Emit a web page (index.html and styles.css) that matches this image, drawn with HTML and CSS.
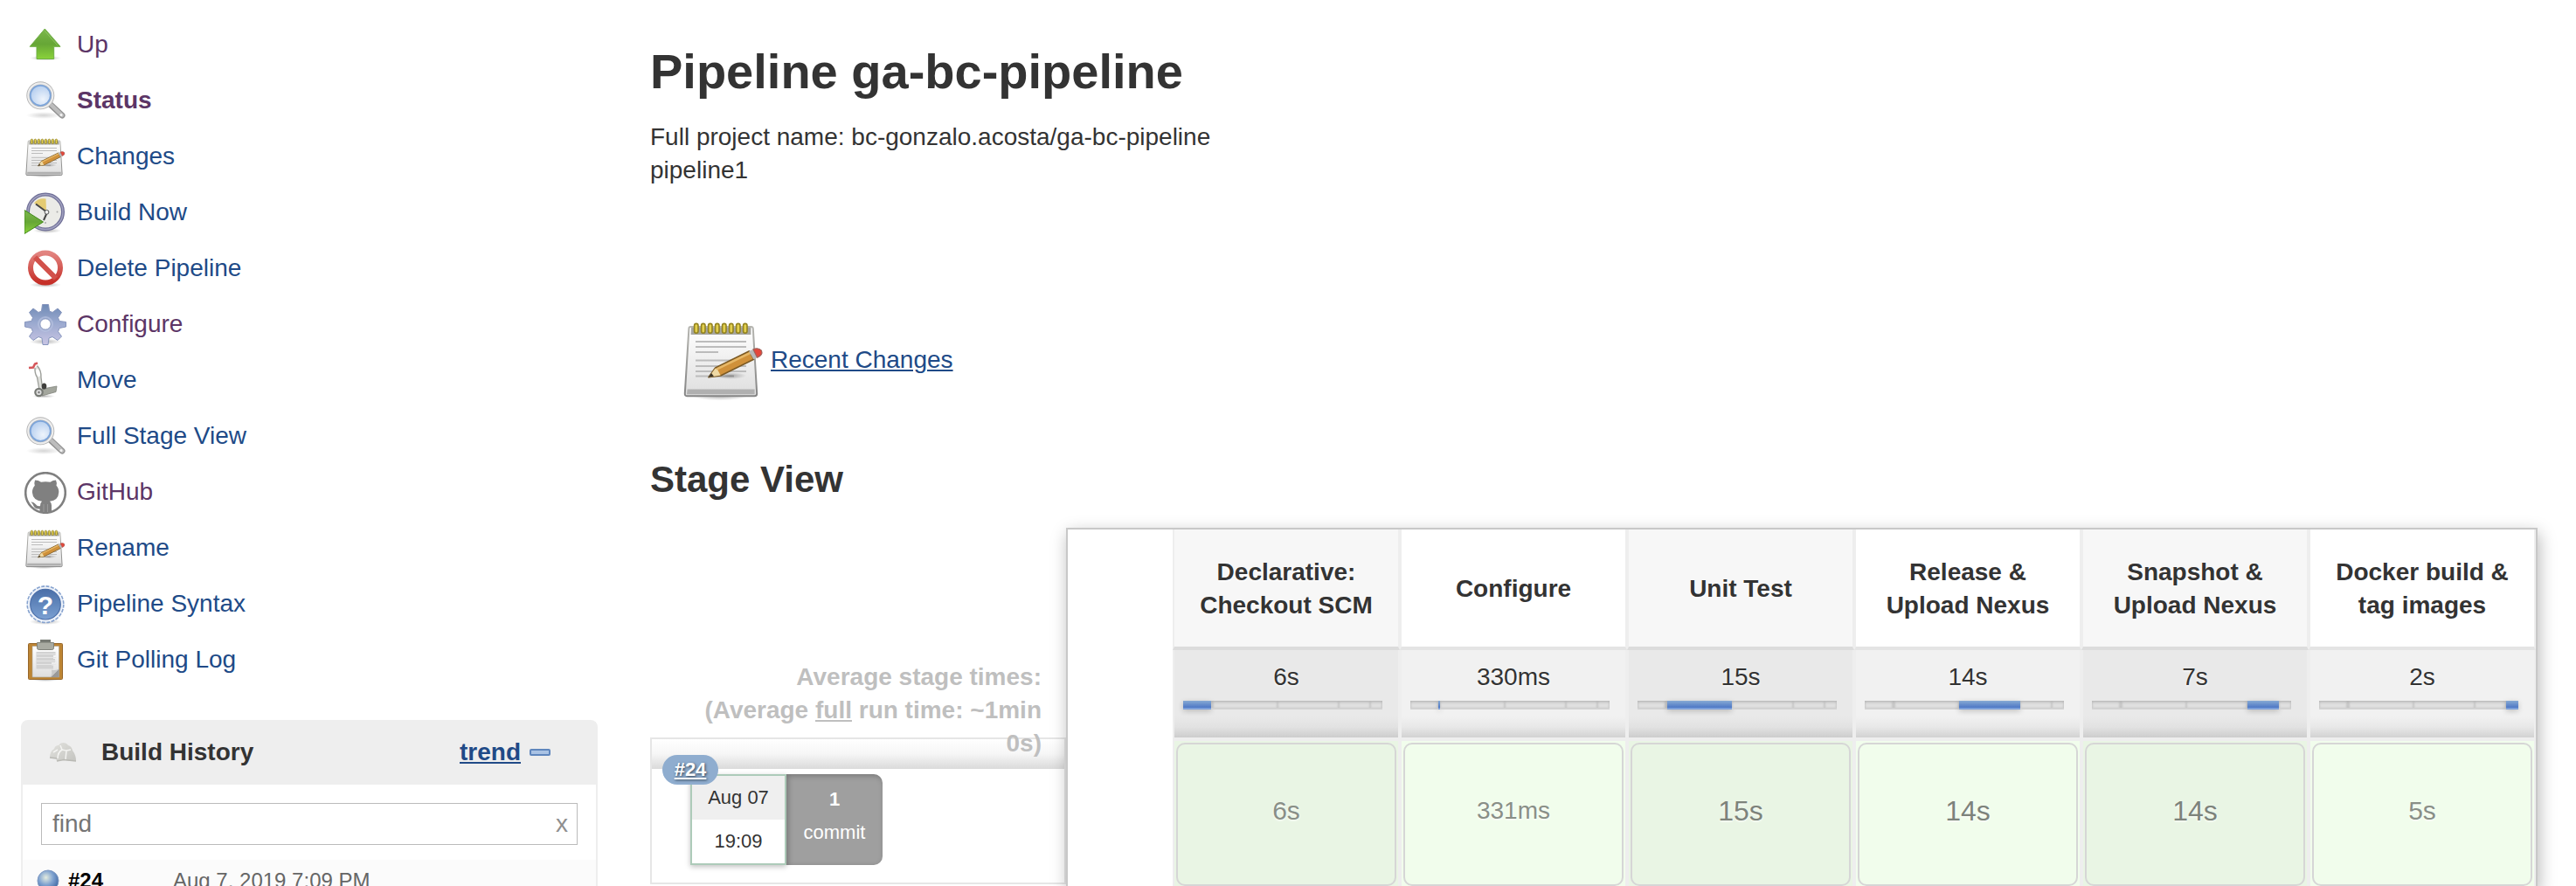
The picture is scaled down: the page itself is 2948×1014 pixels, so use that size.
FILE: index.html
```html
<!DOCTYPE html>
<html lang="en">
<head>
<meta charset="utf-8">
<title>ga-bc-pipeline</title>
<link rel="stylesheet" href="styles.css">
</head>
<body>
<svg class="defs" width="0" height="0" aria-hidden="true">
  <defs>
    <linearGradient id="g-green" x1="0" y1="0" x2="0" y2="1"><stop offset="0" stop-color="#7cb84c"/><stop offset=".5" stop-color="#66a636"/><stop offset="1" stop-color="#8ad23a"/></linearGradient>
    <radialGradient id="g-lens" cx=".6" cy=".65" r=".7"><stop offset="0" stop-color="#eef4fc"/><stop offset="1" stop-color="#a9c6ec"/></radialGradient>
    <linearGradient id="g-paper" x1="0" y1="0" x2="0" y2="1"><stop offset="0" stop-color="#ffffff"/><stop offset="1" stop-color="#dedede"/></linearGradient>
    <linearGradient id="g-edge" x1="0" y1="0" x2="0" y2="1"><stop offset="0" stop-color="#b5b5b0"/><stop offset="1" stop-color="#858585"/></linearGradient>
    <linearGradient id="g-red" x1="0" y1="0" x2="0" y2="1"><stop offset="0" stop-color="#e28480"/><stop offset="1" stop-color="#c62f28"/></linearGradient>
    <linearGradient id="g-gear" x1="0" y1="0" x2="0" y2="1"><stop offset="0" stop-color="#6f8ab5"/><stop offset=".45" stop-color="#9aa9cf"/><stop offset="1" stop-color="#c9c5e4"/></linearGradient>
    <linearGradient id="g-help" x1="0" y1="0" x2="0" y2="1"><stop offset="0" stop-color="#4a6fa8"/><stop offset="1" stop-color="#7ba0d2"/></linearGradient>
    <radialGradient id="g-ball" cx=".4" cy=".35" r=".7"><stop offset="0" stop-color="#e4ecdf"/><stop offset=".5" stop-color="#7fa2d0"/><stop offset="1" stop-color="#3a639f"/></radialGradient>
    <radialGradient id="g-shadow"><stop offset="0" stop-color="#000" stop-opacity=".28"/><stop offset="1" stop-color="#000" stop-opacity="0"/></radialGradient>
    <linearGradient id="g-hat" x1="0" y1="0" x2="1" y2="1"><stop offset="0" stop-color="#e2e2de"/><stop offset="1" stop-color="#c4c4c0"/></linearGradient>
  </defs>
  <symbol id="i-up" viewBox="0 0 48 48">
    <ellipse cx="24" cy="38.500" rx="18" ry="3" fill="url(#g-shadow)"/>
    <path d="M23.300 5 41 25.300H33.700V39.500H14V25.300H6.200Z" fill="url(#g-green)" stroke="#6fae45" stroke-width="1"/>
    <path d="M23.300 7.500 37.800 24" stroke="#a4d276" stroke-width="1" fill="none" opacity=".6"/>
  </symbol>
  <symbol id="i-search" viewBox="0 0 48 48">
    <ellipse cx="22" cy="40" rx="20" ry="4" fill="url(#g-shadow)" opacity=".6"/>
    <path d="M29 27 43 40" stroke="#929292" stroke-width="7" stroke-linecap="round"/>
    <path d="M29.500 27 43 40" stroke="#bdbdbd" stroke-width="4.500" stroke-linecap="round"/>
    <circle cx="42" cy="39.500" r="1.500" fill="#f4f4f4"/>
    <circle cx="18.300" cy="17.300" r="14" fill="url(#g-lens)" stroke="#b3b3b3" stroke-width="4"/>
    <circle cx="18.300" cy="17.300" r="14" fill="none" stroke="#ededed" stroke-width="2.200"/>
    <circle cx="18.300" cy="17.300" r="11.500" fill="none" stroke="#7da5da" stroke-width="1.800"/>
  </symbol>
  <symbol id="i-notepad" viewBox="0 0 48 48">
    <ellipse cx="22" cy="44.700" rx="16" ry="2.500" fill="url(#g-shadow)"/>
    <path d="M5.200 5H39.800Q40.800 5 40.900 6L43.100 43.200Q43.100 44.600 41.800 44.600H3Q1.800 44.600 1.900 43.200L4.200 6Q4.200 5 5.200 5Z" fill="url(#g-paper)" stroke="url(#g-edge)" stroke-width="1"/>
    <path d="M5.500 5.500H39.700V9.500H5.300Z" fill="#a5a5a0"/>
    <path d="M3.300 40.800H41.800V43.600H3Z" fill="#b0b0b0"/>
    <path d="M8 13.500H37M8 16.500H37M8 19.500H21M8 24.300H37M8 27.500H37M8 30.500H37M8 33.300H30" stroke="#bcbcbc" stroke-width="1"/>
    <g fill="#e3d04e" stroke="#93831f" stroke-width=".8"><rect x="7.300" y="3.200" width="2.200" height="5.400" rx="1.100"/><rect x="11.300" y="3.200" width="2.200" height="5.400" rx="1.100"/><rect x="15.300" y="3.200" width="2.200" height="5.400" rx="1.100"/><rect x="19.300" y="3.200" width="2.200" height="5.400" rx="1.100"/><rect x="23.300" y="3.200" width="2.200" height="5.400" rx="1.100"/><rect x="27.300" y="3.200" width="2.200" height="5.400" rx="1.100"/><rect x="31.300" y="3.200" width="2.200" height="5.400" rx="1.100"/><rect x="35.300" y="3.200" width="2.200" height="5.400" rx="1.100"/></g>
    <ellipse cx="28" cy="33" rx="9" ry="2" fill="url(#g-shadow)"/>
    <path d="M15.500 33.900 19.300 28.500 38.800 18.900 41.300 23.600 22.300 33Z" fill="#d0913a" stroke="#7b5a25" stroke-width=".8" stroke-linejoin="round"/>
    <path d="M20 29.300 39.300 19.900" stroke="#e6b868" stroke-width="1.300"/>
    <path d="M15.500 33.900 19.300 28.700 20.700 29.800 22.300 32.800Z" fill="#efd9a4"/>
    <path d="M15.300 34 17 31.500 18.500 33.300Z" fill="#3c3528"/>
    <path d="M38.500 19 41 17.900 43.300 22.600 41.200 23.600Z" fill="#b9b9b9"/>
    <path d="M41 17.900Q44 16.700 45.700 18.600 46.800 21 43.300 22.600Z" fill="#e4473b" stroke="#a06058" stroke-width=".6"/>
  </symbol>
  <symbol id="i-clock" viewBox="0 0 48 48">
    <ellipse cx="26" cy="44" rx="16" ry="3" fill="url(#g-shadow)"/>
    <circle cx="24" cy="22.500" r="20" fill="#ebebe7" stroke="#6f6f97" stroke-width="4"/>
    <circle cx="24" cy="22.500" r="20" fill="none" stroke="#a2a2c0" stroke-width="1.500"/>
    <path d="M11 12.500Q16 6 24.500 7.500L25 22Z" fill="#e4cb72"/>
    <path d="M13 13.500 26 23 22 32" stroke="#454545" stroke-width="2" fill="none"/>
    <circle cx="25.500" cy="22.800" r="2.400" fill="#eee" stroke="#555" stroke-width="1"/>
    <g fill="#aaa"><circle cx="37.500" cy="22.500" r="1"/><circle cx="24" cy="35" r="1"/></g>
    <path d="M0 20.500 21.500 34 0 47.500Z" fill="url(#g-green)" stroke="#438a1c" stroke-width="1"/>
  </symbol>
  <symbol id="i-no" viewBox="0 0 48 48">
    <ellipse cx="24" cy="42" rx="18" ry="3" fill="url(#g-shadow)"/>
    <circle cx="24" cy="22.500" r="17" fill="#fff" stroke="url(#g-red)" stroke-width="6"/>
    <path d="M12 10.500 36 34.500" stroke="#d2514b" stroke-width="6"/>
  </symbol>
  <symbol id="i-gear" viewBox="0 0 48 48">
    <ellipse cx="24" cy="43" rx="18" ry="3.500" fill="url(#g-shadow)"/>
    <path fill-rule="evenodd" d="M20.500.500H27.500L28.500 8 32 9.500 38 5 42.500 9.500 38.500 15.500 40 19.500 47.500 20.500V26L40 27.500 38.500 31.500 42.500 37 38 41.500 32 37.500 28 39 27 46.500H21L20 39 16 37.500 10 41.500 5.500 37 9.500 31.500 8 27.500.500 26V20.500L8 19.500 9.500 15.500 5.500 9.500 10 5 16 9.500 19.500 8ZM24 16.800A6.200 6.200 0 1 0 24 29.200 6.200 6.200 0 1 0 24 16.800Z" fill="url(#g-gear)" stroke="#8695bd" stroke-width="1" stroke-linejoin="round"/>
    <circle cx="24" cy="23" r="8" fill="none" stroke="#b6c2e0" stroke-width="2" opacity=".7"/>
  </symbol>
  <symbol id="i-move" viewBox="0 0 48 48">
    <ellipse cx="22" cy="41.500" rx="13" ry="2" fill="url(#g-shadow)"/>
    <path d="M21 33 37 30 36 36.500 20 41Z" fill="#a3a69d" stroke="#80837b" stroke-width=".8"/>
    <path d="M12 9Q11.500 15 14.500 20L17 34 21 35 19 20Q19.500 12 14.500 6.500" fill="#dfe0dc" stroke="#9c9e99" stroke-width="1.300"/>
    <path d="M13 12Q13 16 16 19.500L18 18Q18 12 14.500 10Z" fill="#fff"/>
    <path d="M5 9 10 8.500 12 4.500 15 3.500" stroke="#d4565a" stroke-width="2.600" fill="none"/>
    <ellipse cx="22.500" cy="30" rx="2.800" ry="3.500" fill="#3f3f3d"/>
    <circle cx="16.500" cy="37" r="4.200" fill="#ddd" stroke="#777a75" stroke-width="2.200"/>
    <circle cx="16.500" cy="37" r="1.200" fill="#777"/>
  </symbol>
  <symbol id="i-github" viewBox="0 0 48 48">
    <circle cx="24" cy="24" r="22.800" fill="#fff" stroke="#808080" stroke-width="2.600"/>
    <path d="M12 9.500Q16 9.500 19 11.700 24 10.700 29.500 11.700 32.500 9.500 36 9.500 37.500 13 36.500 15.800 39.700 19 39.200 24 38.800 32.500 29 33.800 31 35.800 31 38.500V46Q24 48 17.500 46V42.500Q12.500 43 10.700 39.500 9.500 36.500 7.500 34.500 10.500 34 12.700 37 14.700 39.800 18 39 18 35.500 20 33.800 9.600 32.500 9 24 8.700 19 11.800 15.800 10.800 13 12 9.500Z" fill="#808080"/>
    <path d="M22 37V46M26.500 37V46" stroke="#9a9a9a" stroke-width="1"/>
  </symbol>
  <symbol id="i-clipboard" viewBox="0 0 48 48">
    <ellipse cx="24" cy="46" rx="16" ry="2" fill="url(#g-shadow)"/>
    <rect x="4.500" y="4.500" width="39" height="41" rx="1" fill="#bd8534" stroke="#96662a" stroke-width="1"/>
    <path d="M9 7.500H39.500V43H9Z" fill="url(#g-paper)" stroke="#a8a08e" stroke-width=".6"/>
    <path d="M13.500 14H35.500V18H33V22H35V26H31V29.500H33V33.500H13.500Z" fill="#d2d2d2"/>
    <path d="M13.500 16.500H36M13.500 20.500H36M13.500 24.500H36M13.500 28.500H36" stroke="#e6e6e6" stroke-width="1"/>
    <path d="M30 43 39.500 33.500V43Z" fill="#999"/>
    <path d="M30 43Q32 39 31 34.500 35 36 39.500 33.500Z" fill="#c8c8c8"/>
    <path d="M18.500 0H29.500V3.500H33.500V9.500Q33.500 11.500 31.500 11.500H16.500Q14.500 11.500 14.500 9.500V3.500H18.500Z" fill="#a9aba2" stroke="#80827a" stroke-width="1"/>
    <path d="M18.500 0H29.500V3.500H18.500Z" fill="#777a73"/>
  </symbol>
</svg>

<div class="page">
  <aside class="sidebar">
    <nav class="tasks">
      <a class="task visited" href="#"><svg class="icon"><use href="#i-up"/></svg><span>Up</span></a>
      <a class="task visited current" href="#"><svg class="icon"><use href="#i-search"/></svg><span>Status</span></a>
      <a class="task" href="#"><svg class="icon"><use href="#i-notepad"/></svg><span>Changes</span></a>
      <a class="task" href="#"><svg class="icon"><use href="#i-clock"/></svg><span>Build Now</span></a>
      <a class="task" href="#"><svg class="icon"><use href="#i-no"/></svg><span>Delete Pipeline</span></a>
      <a class="task visited" href="#"><svg class="icon"><use href="#i-gear"/></svg><span>Configure</span></a>
      <a class="task" href="#"><svg class="icon"><use href="#i-move"/></svg><span>Move</span></a>
      <a class="task" href="#"><svg class="icon"><use href="#i-search"/></svg><span>Full Stage View</span></a>
      <a class="task visited" href="#"><svg class="icon"><use href="#i-github"/></svg><span>GitHub</span></a>
      <a class="task" href="#"><svg class="icon"><use href="#i-notepad"/></svg><span>Rename</span></a>
      <a class="task" href="#"><svg class="icon" viewBox="0 0 48 48">
        <ellipse cx="24" cy="43.500" rx="18" ry="3.500" fill="url(#g-shadow)"/>
        <circle cx="24" cy="23.700" r="20.800" fill="#edf2fa" stroke="#87a3cf" stroke-width="1.600" stroke-dasharray="4 1.440"/>
        <circle cx="24" cy="23.700" r="17.300" fill="url(#g-help)" stroke="#4d70aa" stroke-width="1.200"/>
        <text x="24" y="34.500" text-anchor="middle" class="help-mark">?</text>
      </svg><span>Pipeline Syntax</span></a>
      <a class="task" href="#"><svg class="icon"><use href="#i-clipboard"/></svg><span>Git Polling Log</span></a>
    </nav>

    <section class="history">
      <header class="history-head">
        <svg class="weather" viewBox="0 0 32 24"><path d="M1 18Q1 11 6 8 7 4 11 4 13 1 16 1 20 1 22 4 26 5 27 10 31 15 31 22L21 21.500 17 20 9 22 8 18.500Z" fill="url(#g-hat)"/><path d="M10 19Q10 12 15 9L20 10 19 20M20 10 25 9M15 9 13 4M5 12 10 9" stroke="#f4f4f2" stroke-width="1.500" fill="none"/><path d="M1 18 9 19M9 22 17 20.500 31 22" stroke="#b9b9b4" stroke-width="1.300" fill="none"/></svg>
        <h2 class="history-title">Build History</h2>
        <a class="trend" href="#">trend</a>
        <button class="collapse" type="button" aria-label="Collapse"></button>
      </header>
      <div class="find">
        <input class="find-input" type="text" placeholder="find" aria-label="Find build">
        <button class="find-clear" type="button">x</button>
      </div>
      <div class="build">
        <svg class="ball" viewBox="0 0 26 26"><circle cx="13" cy="13" r="12" fill="url(#g-ball)" stroke="#7f9ac2" stroke-width="1"/></svg>
        <a class="build-number" href="#">#24</a>
        <a class="build-date" href="#">Aug 7, 2019 7:09 PM</a>
      </div>
    </section>
  </aside>

  <main class="main">
    <h1 class="title">Pipeline ga-bc-pipeline</h1>
    <p class="description">Full project name: bc-gonzalo.acosta/ga-bc-pipeline<br>pipeline1</p>
    <a class="recent" href="#"><svg class="icon-large"><use href="#i-notepad"/></svg><span>Recent Changes</span></a>
    <h2 class="stage-title">Stage View</h2>

    <div class="stage-view">
      <div class="runs">
        <p class="averages">Average stage times:<br>(Average <span class="full">full</span> run time: ~1min 0s)</p>
        <div class="run">
          <div class="run-shade"></div>
          <div class="run-info">
            <a class="run-badge" href="#">#24</a>
            <div class="run-time"><span class="run-day">Aug 07</span><span class="run-hour">19:09</span></div>
            <div class="run-commits"><strong>1</strong><span>commit</span></div>
          </div>
        </div>
      </div>

      <div class="stages">
        <table class="stage-table">
          <thead>
            <tr class="names">
              <td class="blank"></td>
              <th>Declarative: Checkout SCM</th>
              <th>Configure</th>
              <th>Unit Test</th>
              <th>Release &amp; Upload Nexus</th>
              <th>Snapshot &amp; Upload Nexus</th>
              <th>Docker build &amp; tag images</th>
            </tr>
          </thead>
          <tbody>
            <tr class="times">
              <td class="blank"></td>
              <td>6s<div class="bar"><i class="s1 on"></i><i class="s2"></i><i class="s3"></i><i class="s4"></i><i class="s5"></i><i class="s6"></i></div></td>
              <td>330ms<div class="bar"><i class="s1"></i><i class="s2 on"></i><i class="s3"></i><i class="s4"></i><i class="s5"></i><i class="s6"></i></div></td>
              <td>15s<div class="bar"><i class="s1"></i><i class="s2"></i><i class="s3 on"></i><i class="s4"></i><i class="s5"></i><i class="s6"></i></div></td>
              <td>14s<div class="bar"><i class="s1"></i><i class="s2"></i><i class="s3"></i><i class="s4 on"></i><i class="s5"></i><i class="s6"></i></div></td>
              <td>7s<div class="bar"><i class="s1"></i><i class="s2"></i><i class="s3"></i><i class="s4"></i><i class="s5 on"></i><i class="s6"></i></div></td>
              <td>2s<div class="bar"><i class="s1"></i><i class="s2"></i><i class="s3"></i><i class="s4"></i><i class="s5"></i><i class="s6 on"></i></div></td>
            </tr>
            <tr class="results">
              <td class="blank"></td>
              <td><div class="result medium">6s</div></td>
              <td><div class="result short">331ms</div></td>
              <td><div class="result long">15s</div></td>
              <td><div class="result long">14s</div></td>
              <td><div class="result long">14s</div></td>
              <td><div class="result medium">5s</div></td>
            </tr>
          </tbody>
        </table>
      </div>
    </div>
  </main>
</div>
</body>
</html>
```
FILE: styles.css
```css
* { box-sizing: border-box; }

html, body { height: 100%; }

body {
  margin: 0;
  overflow: hidden;
  background: #fff;
  color: #333;
  font: 28px/38px "Liberation Sans", Arial, Helvetica, sans-serif;
}

h1, h2, p { margin: 0; }

a { color: #204a87; text-underline-offset: 2px; }

button { padding: 0; border: 0; background: none; font: inherit; }

.defs { position: absolute; }

.help-mark { fill: #fff; font: bold 30px "Liberation Sans", Arial, sans-serif; }

.page {
  display: flex;
  gap: 60px;
  padding: 0 44px 0 24px;
}

/* Sidebar */
.sidebar { flex: 0 0 660px; padding-top: 28px; }

.tasks { display: flex; flex-direction: column; gap: 16px; }

.task {
  display: flex;
  align-items: center;
  gap: 12px;
  padding-left: 4px;
  text-decoration: none;
}

.task span { padding-bottom: 2px; }
.task.visited { color: #5c3566; }
.task.current { font-weight: bold; }

.icon { width: 48px; height: 48px; }

.history {
  margin-top: 44px;
  border: 2px solid #eee;
  border-radius: 8px;
}

.history-head {
  display: flex;
  align-items: center;
  height: 72px;
  padding: 0 52px 2px 30px;
  background: #eee;
}

.weather { width: 32px; height: 24px; margin-right: 28px; }

.history-title { flex: 1; font-size: 28px; line-height: 38px; }

.trend { font-weight: bold; margin-right: 10px; }

.collapse {
  width: 24px;
  height: 8px;
  border: 2px solid #5f86bd;
  border-radius: 2px;
  background: #a9c2e4;
}

.find {
  display: flex;
  align-items: center;
  height: 48px;
  margin: 21px 21px 17px;
  padding: 0 10px 0 12px;
  border: 1px solid #bbb;
}

.find-input {
  flex: 1;
  min-width: 0;
  padding: 0;
  border: 0;
  outline: 0;
  background: none;
  color: #333;
  font: inherit;
}

.find-input::placeholder { color: #757575; opacity: 1; }

.find-clear { color: #8f8f8f; }

.build {
  display: flex;
  align-items: center;
  height: 48px;
  padding: 0 16px;
  background: #fbfbfb;
  font-size: 24px;
}

.build a { text-decoration: none; }
.ball { width: 26px; height: 26px; margin-right: 10px; }
.build-number { flex: 0 0 120px; color: #000; font-weight: bold; }
.build .build-date { color: #666; }

/* Main column */
.main { flex: 1; min-width: 0; padding-top: 50px; }

.title { margin-bottom: 24px; font-size: 56px; line-height: 64px; }

.recent {
  display: inline-flex;
  align-items: center;
  gap: 6px;
  margin: 150px 0 64px 36px;
}

.icon-large { width: 96px; height: 96px; }

.stage-title { margin-bottom: 32px; padding-top: 2px; font-size: 42px; line-height: 46px; }

.stage-view { display: flex; }

.runs { flex: 0 0 476px; padding-top: 152px; }

.averages {
  position: relative;
  height: 88px;
  padding: 0 28px 0 60px;
  color: #bfbfbf;
  font-weight: bold;
  text-align: right;
}

.full { text-decoration: underline; }

.run {
  height: 168px;
  border: 2px solid #e6e6e6;
}

.run-shade {
  height: 34px;
  background: linear-gradient(#fff, #f6f6f6 50%, #dadada);
}

.run-info {
  position: relative;
  display: flex;
  margin: 6px 0 0 44px;
  font-size: 22px;
}

.run-badge {
  position: absolute;
  top: -22px;
  left: -32px;
  width: 64px;
  height: 34px;
  border-radius: 17px;
  background: #8fadcf;
  color: #fff;
  font-weight: bold;
  line-height: 34px;
  text-align: center;
  text-shadow: 1px 1px 3px #345;
}

.run-time, .run-commits {
  display: flex;
  flex-direction: column;
  width: 110px;
  height: 104px;
  text-align: center;
}

.run-time {
  border: 2px solid #adcbb9;
  background: #fff;
  box-shadow: 0 2px 6px rgba(0, 0, 0, .25);
}

.run-time span { flex: 1; line-height: 50px; }
.run-day { background: #efefef; }

.run-commits {
  padding-top: 10px;
  border-radius: 0 10px 10px 0;
  background: #9f9f9f;
  box-shadow: inset 2px 2px 6px rgba(0, 0, 0, .25);
  color: #fff;
}

/* Stage table */
.stages {
  position: relative;
  flex: 1;
  min-width: 0;
  border: 2px solid #c8c8c8;
  background: #fff;
  box-shadow: 2px 6px 18px rgba(0, 0, 0, .28);
}

.stage-table {
  width: 100%;
  table-layout: fixed;
  border-spacing: 0;
}

.stage-table th, .stage-table td {
  padding: 0;
  border: 0 solid #eee;
  border-width: 0 2px;
  text-align: center;
  text-shadow: 0 1px 3px #fff;
}

.stage-table .blank {
  width: 120px;
  border: 0;
  background: #fff;
}

.stage-table .names th {
  height: 138px;
  padding: 2px 20px 0;
  border-bottom: 4px solid #e4e4e4;
}

.stage-table .names th:nth-child(even) { background: #f7f7f7; border-bottom-color: #dcdcdc; }

.stage-table .times td:not(.blank) {
  height: 104px;
  padding-top: 12px;
  border-bottom: 4px solid #eee;
  background: linear-gradient(#f1f1f1 76%, #e8e8e8 88%, #d2d2d2);
  background-clip: padding-box;
  vertical-align: top;
}

.stage-table .times td:nth-child(even) {
  background: linear-gradient(#e9e9e9 76%, #e2e2e2 88%, #cdcdcd);
  background-clip: padding-box;
}

.bar {
  display: flex;
  height: 10px;
  margin: 8px 18px 0 10px;
}

.bar i {
  background: #e0e0e0;
  border-bottom: 2px solid #d2d2d2;
  box-shadow: inset 0 2px 3px rgba(0, 0, 0, .14), inset 0 0 3px rgba(0, 0, 0, .08);
}

.bar .on {
  background: linear-gradient(#86a9d3, #4d77c6);
  border-bottom-color: #7c9fd8;
  box-shadow: 0 2px 6px rgba(0, 0, 0, .2);
}

.s1 { flex: 32; }
.s2 { flex: 2; }
.s3 { flex: 74; }
.s4 { flex: 70; }
.s5 { flex: 36; }
.s6 { flex: 14; }

.stage-table .results td:not(.blank) {
  padding: 2px;
  background: #f1fdec;
  background-clip: padding-box;
}

.stage-table .results td:nth-child(even) { background-color: #e9f5e4; }

.result {
  height: 164px;
  padding-top: 57px;
  border: 2px solid #d6d6d6;
  border-radius: 10px;
  color: #898f87;
}

.short { font-size: 28px; }
.medium { font-size: 30px; }
.long { color: #7d837b; font-size: 32px; }
```
